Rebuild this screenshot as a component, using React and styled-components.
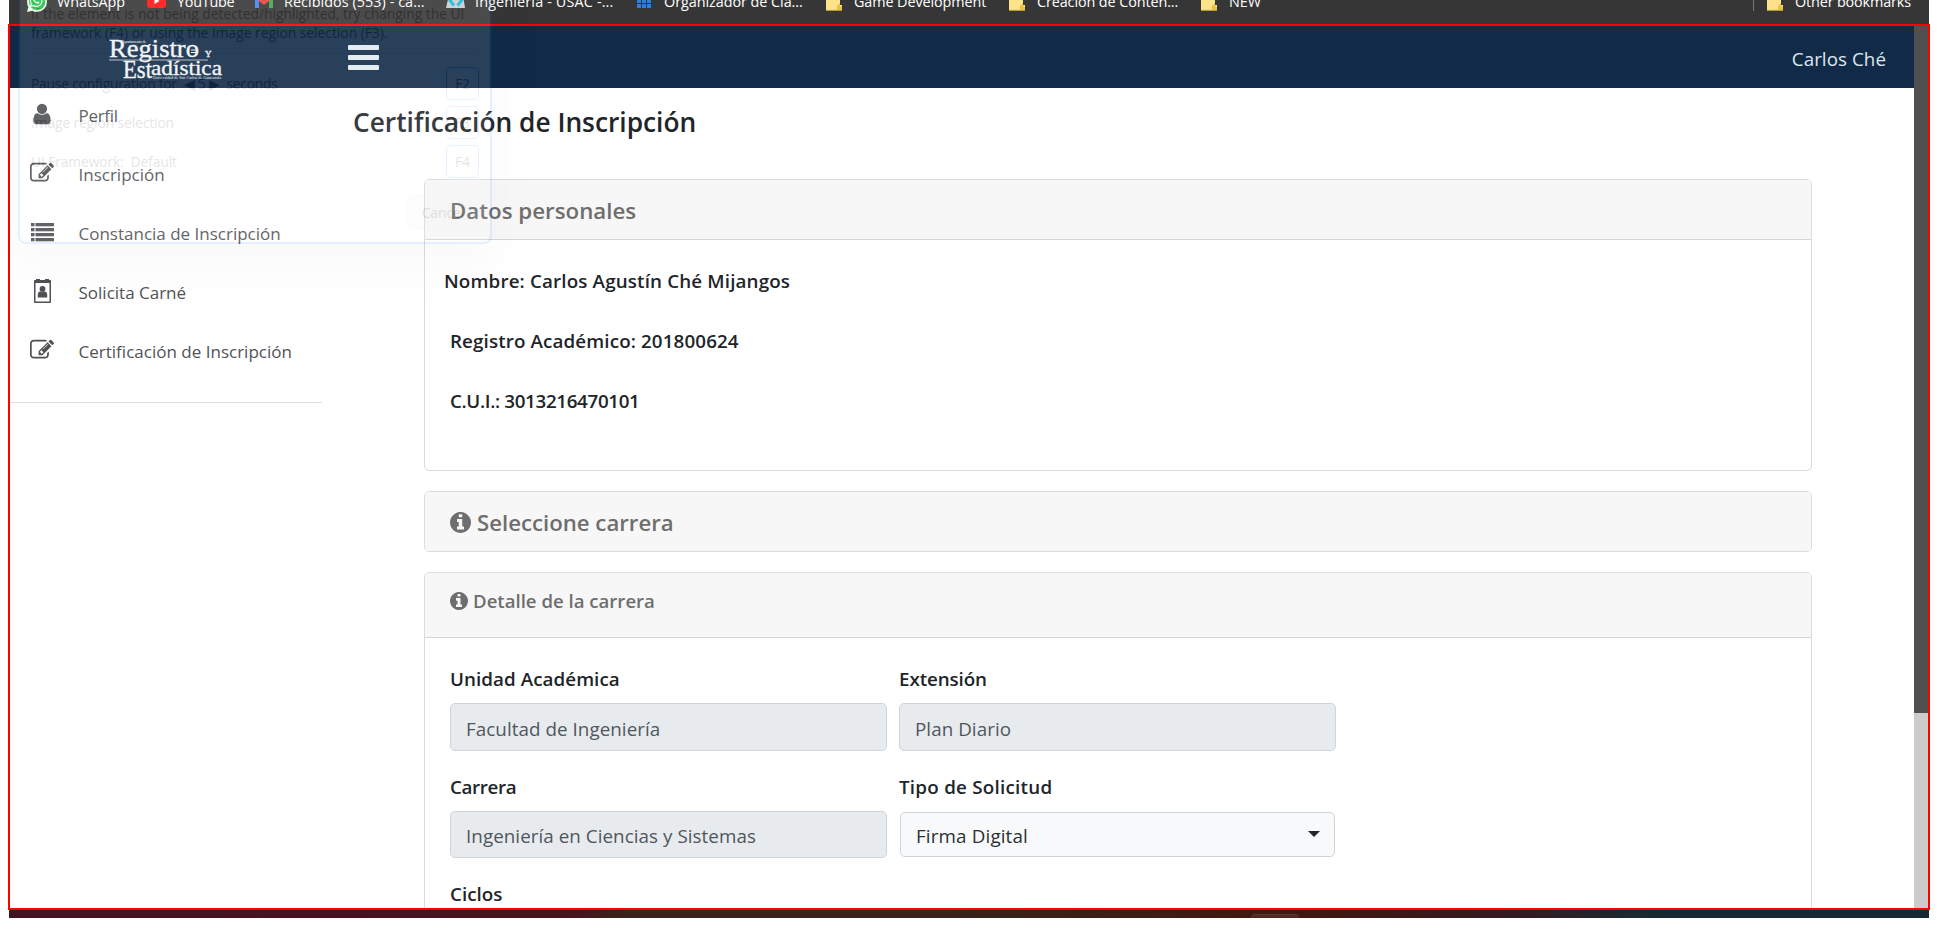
import React from "react";
import styled, { createGlobalStyle } from "styled-components";
import { FaWhatsapp } from "react-icons/fa";

const Global = createGlobalStyle`
  body { margin: 0; background: #fff; font-family: "Open Sans", "Noto Sans", sans-serif; color: #212529; overflow: hidden; }
  *, *::before, *::after { box-sizing: border-box; }
  h1, h2, h3, p { margin: 0; }
`;

const Screen = styled.div`
  position: relative;
  width: 1938px;
  height: 934px;
  padding: 0 9px 0 8px;
  overflow: hidden;
  background: #fff;
`;

const BookmarkBar = styled.div`
  height: 24px;
  margin-left: 1px;
  background: #363636;
  overflow: hidden;
`;
const BookmarkRow = styled.div`
  display: flex;
  align-items: center;
  height: 30px;
  margin-top: -14px;
  padding-left: 18px;
`;
const Bookmark = styled.div`
  display: flex;
  align-items: center;
  flex: none;
  width: ${(p) => p.$width}px;
  color: #fff;
  font-size: 14.4px;
  line-height: 18px;
  white-space: pre;
  letter-spacing: ${(p) => p.$track || 0}px;
`;
const BookmarkIcon = styled.span`
  display: flex;
  flex: none;
  width: ${(p) => p.$slot || 28}px;
`;
const BookmarkLabel = styled.span`
  padding-top: 2px;
`;
const OtherBookmarks = styled.div`
  display: flex;
  margin-left: auto;
  padding-left: 13px;
  border-left: 1px solid #777;
`;

const Frame = styled.div`
  display: flex;
  width: 1922px;
  height: 886px;
  border: 2px solid #fe0000;
`;
const Page = styled.div`
  width: 1904px;
  display: flex;
  flex-direction: column;
  overflow: hidden;
`;
const Scrollbar = styled.div`
  width: 14px;
  background: #ccc;
`;
const Thumb = styled.div`
  height: 687px;
  background: #505050;
`;

const Header = styled.header`
  display: flex;
  align-items: center;
  flex: none;
  height: 62px;
  padding: 0 28px 0 97px;
  background: #102a47;
`;
const Logo = styled.svg`
  width: 130px;
  height: 48px;
`;
const Burger = styled.div`
  display: flex;
  flex-direction: column;
  gap: 5px;
  margin-left: 110.5px;
  span { width: 31px; height: 5px; border-radius: 1px; background: #e0eaf1; }
`;
const UserName = styled.span`
  margin-left: auto;
  padding-top: 3px;
  font-size: 18.8px;
  line-height: 26px;
  letter-spacing: 0.05px;
  color: #dfe7ef;
`;

const Columns = styled.div`
  display: flex;
  flex: 1;
`;
const Sidebar = styled.nav`
  width: 312px;
  height: 315px;
  border-bottom: 1px solid #dedede;
`;
const NavItem = styled.div`
  display: flex;
  align-items: center;
  height: 59px;
  padding-left: 20px;
  color: #515357;
  font-size: 17px;
  line-height: 24px;
  letter-spacing: ${(p) => p.$track || 0}px;
  &:first-child { margin-top: -2px; }
  svg { flex: none; width: 24px; height: 24px; margin: -3px 24.5px 0 0; fill: #505154; }
`;

const Main = styled.main`
  flex: 1;
  padding-left: 31px;
`;
const Title = styled.h1`
  height: 91px;
  padding-top: 15px;
  font-size: 26.3px;
  line-height: 38px;
  font-weight: 600;
`;
const Stack = styled.div`
  display: flex;
  flex-direction: column;
  gap: 20px;
  width: 1388px;
  margin-left: 71px;
`;
const Card = styled.section`
  height: ${(p) => p.$height}px;
  border: 1px solid #dcdcdc;
  border-radius: 5px;
  background: #fff;
  overflow: hidden;
`;
const CardHeader = styled.div`
  display: flex;
  align-items: flex-start;
  height: ${(p) => p.$height}px;
  padding: ${(p) => p.$top}px 0 0 25px;
  border-bottom: 1px solid #d5d5d5;
  background: #f7f7f7;
  color: #6e6e6e;
  svg { flex: none; margin: ${(p) => p.$iconTop || 0}px ${(p) => p.$iconGap || 6}px 0 0; }
`;
const CardTitle = styled.h2`
  font-size: ${(p) => p.$size}px;
  line-height: 32px;
  font-weight: 600;
`;
const Person = styled.div`
  padding: 26px 0 0 25px;
`;
const Fact = styled.p`
  height: 60px;
  margin-left: ${(p) => (p.$outdent ? -6 : 0)}px;
  font-size: 18.8px;
  line-height: 30px;
  font-weight: 600;
  letter-spacing: ${(p) => p.$track || 0}px;
`;

const Form = styled.div`
  display: grid;
  grid-template-columns: 437px 437px;
  column-gap: 12px;
  padding: 26px 0 0 25px;
`;
const Field = styled.div`
  height: ${(p) => p.$height || 108}px;
`;
const Label = styled.div`
  height: 39px;
  font-size: 18.8px;
  line-height: 30px;
  font-weight: 600;
  letter-spacing: ${(p) => p.$track || 0}px;
`;
const Control = styled.div`
  display: flex;
  align-items: center;
  height: ${(p) => p.$height || 48}px;
  padding: ${(p) => (p.$height ? 2 : 4)}px 16px 0 15px;
  border: 1px solid #ced4da;
  border-radius: 5px;
  background: #e8ebee;
  color: #4f565d;
  font-size: 18.8px;
  letter-spacing: 0.06px;
`;
const Select = styled(Control)`
  height: 45px;
  margin: 1px 1px 0;
  padding-top: 3px;
  justify-content: space-between;
  background: #f8f9fa;
  color: #2b3035;
  letter-spacing: 0.15px;
`;
const Caret = styled.span`
  border: 6px solid transparent;
  border-top-color: #212529;
  border-bottom: 0;
  margin-top: -5px;
  margin-right: -2px;
`;

const Desktop = styled.div`
  display: flex;
  align-items: flex-end;
  height: 8px;
  margin: 0 0 0 1px;
  padding-left: 1242px;
  background: linear-gradient(90deg, #421322 0, #47131e 560px, #38241a 620px, #38241a 940px, #40180f 1280px, #351a20 1500px, #182a31 1640px, #182a31 100%);
`;
const TaskTab = styled.div`
  width: 48px;
  height: 4px;
  border-radius: 4px 4px 0 0;
  border-top: 1px solid #5b3b31;
  background: #4b2a20;
`;

const Ghost = styled.div`
  position: absolute;
  left: 18px;
  top: -40px;
  width: 474px;
  height: 284px;
  padding: 40px 11px 0;
  border: 2px solid #0a6cff;
  border-radius: 8px;
  background: #fff;
  color: #000;
  opacity: 0.1;
  box-shadow: 0 24px 40px rgba(0, 0, 0, 0.18);
  font-size: 13.8px;
  line-height: 19px;
  white-space: pre;
`;
const GhostIntro = styled.div`
  height: 52px;
  padding-top: 2px;
  border-bottom: 1px solid #ddd;
`;
const GhostRow = styled.div`
  display: flex;
  align-items: center;
  justify-content: space-between;
  height: 39px;
  letter-spacing: -0.1px;
  &:nth-child(2) { margin-top: 10px; letter-spacing: -0.2px; }
`;
const Key = styled.span`
  display: flex;
  align-items: center;
  justify-content: center;
  width: 33px;
  height: 33px;
  border: 1px solid #1684ff;
  border-radius: 5px;
`;
const Cancel = styled.div`
  width: 72px;
  height: 34px;
  margin: 14px 0 0 auto;
  border-radius: 5px;
  border: 1px solid #ddd;
  background: #f1f1f1;
  line-height: 33px;
  text-align: center;
`;

const Folder = () => (
  <svg width="16" height="20" viewBox="0 0 16 20">
    <path d="M0 2h6l2 2h6v10h2v5H0z" fill="#ffe38a" />
    <path d="M11 19v-4l3-3v3l2 1v3z" fill="#e9c23f" />
    <path d="M0 19.3h16" stroke="#d9b63a" />
  </svg>
);
const WhatsApp = () => (
  <svg width="20" height="22" viewBox="0 -2 20 22">
    <path d="M10 0a10 10 0 0 1 0 20q-3 0-5-1.300L0 20l1.400-5A10 10 0 0 1 10 0z" fill="#e9fbe9" />
    <circle cx="10.200" cy="9.900" r="8.200" fill="#25c24b" />
    <FaWhatsapp x="2" y="1.500" width="16" height="16" color="#fff" />
  </svg>
);
const YouTube = () => (
  <svg width="19" height="14" viewBox="0 0 19 14">
    <rect width="19" height="14" rx="3" fill="#f11" />
    <path d="M7.500 4v6l5-3z" fill="#fff" />
  </svg>
);
const Gmail = () => (
  <svg width="18" height="14" viewBox="0 0 18 14">
    <path d="M0 2v12h4V6z" fill="#4285f4" />
    <path d="M14 6v8h4V2z" fill="#34a853" />
    <path d="M0 2q1-3 4-1l5 4 5-4q3-2 4 1v2l-9 7-9-7z" fill="#ea4335" />
  </svg>
);
const Code = () => (
  <svg width="19" height="13" viewBox="0 0 19 13">
    <path d="M3 0h14l2 13H0z" fill="#c9cdd0" />
    <path d="M8 0L4 5.500l4 5M11.500 0l4 5.500-4 5" fill="none" stroke="#16b9dc" strokeWidth="3" />
  </svg>
);
const Grid = () => (
  <svg width="14" height="14" viewBox="0 0 14 14" fill="#2f7de0">
    {[0, 5, 10].map((y) => [0, 5, 10].map((x) => <rect key={x + "-" + y} x={x} y={y} width="4" height="4" />))}
  </svg>
);

const bookmarks = [
  { icon: WhatsApp, label: "WhatsApp", width: 120, slot: 30, track: -0.1 },
  { icon: YouTube, label: "YouTube", width: 108, slot: 30, track: -0.25 },
  { icon: Gmail, label: "Recibidos (553) - ca...", width: 191, slot: 29, track: 0.05 },
  { icon: Code, label: "Ingeniería - USAC -...", width: 191, slot: 29, track: 0.15 },
  { icon: Grid, label: "Organizador de Cla...", width: 189, slot: 27, track: -0.05 },
  { icon: Folder, label: "Game Development", width: 183, track: -0.1 },
  { icon: Folder, label: "Creación de Conten...", width: 192, track: -0.1 },
  { icon: Folder, label: "NEW", width: 80, track: 0 },
];

const UserIcon = () => (
  <svg viewBox="0 0 1792 1792"><path d="M1536 1399q0 109-62.500 187t-150.500 78h-854q-88 0-150.500-78t-62.500-187q0-85 8.500-160.500t31.500-152 58.500-131 94-89 134.500-34.500q131 128 313 128t313-128q76 0 134.500 34.500t94 89 58.500 131 31.500 152 8.500 160.500zm-256-887q0 159-112.500 271.500t-271.500 112.500-271.500-112.500-112.500-271.500 112.500-271.500 271.500-112.500 271.500 112.500 112.500 271.500z" /></svg>
);
const EditIcon = () => (
  <svg viewBox="0 0 1792 1792"><path d="M888 1184l116-116-152-152-116 116v56h96v96h56zm440-720q-16-16-33 1l-350 350q-17 17-1 33t33-1l350-350q17-17 1-33zm80 594v190q0 119-84.500 203.500t-203.500 84.500h-832q-119 0-203.500-84.500t-84.500-203.500v-832q0-119 84.500-203.500t203.500-84.500h832q63 0 117 25 15 7 18 23 3 17-9 29l-49 49q-14 14-32 8-23-6-45-6h-832q-66 0-113 47t-47 113v832q0 66 47 113t113 47h832q66 0 113-47t47-113v-126q0-13 9-22l64-64q15-15 35-7t20 29zm-96-738l288 288-672 672h-288v-288zm444 132l-92 92-288-288 92-92q28-28 68-28t68 28l152 152q28 28 28 68t-28 68z" /></svg>
);
const InfoIcon = ({ size }) => (
  <svg width={size} height={size} viewBox="128 128 1536 1536" fill="currentColor"><path d="M1152 1376v-160q0-14-9-23t-23-9h-96v-512q0-14-9-23t-23-9h-320q-14 0-23 9t-9 23v160q0 14 9 23t23 9h96v320h-96q-14 0-23 9t-9 23v160q0 14 9 23t23 9h448q14 0 23-9t9-23zm-128-896v-160q0-14-9-23t-23-9h-192q-14 0-23 9t-9 23v160q0 14 9 23t23 9h192q14 0 23-9t9-23zm640 416q0 209-103 385.500t-279.500 279.500-385.500 103-385.500-103-279.500-279.500-103-385.500 103-385.500 279.500-279.500 385.500-103 385.500 103 279.500 279.500 103 385.500z" /></svg>
);
const ListIcon = () => (
  <svg viewBox="0 0 24 24">
    {[3, 8, 13, 18].map((y) => (
      <React.Fragment key={y}>
        <rect x="1" y={y} width="3.500" height="3.300" />
        <rect x="5.500" y={y} width="18.500" height="3.300" />
      </React.Fragment>
    ))}
  </svg>
);
const BadgeIcon = () => (
  <svg viewBox="0 0 24 24">
    <path fillRule="evenodd" d="M5 1h1V0h4v1h5V0h4v1h1q1 0 1 1v21q0 1-1 1H5q-1 0-1-1V2q0-1 1-1zm.500 3v18.500h14V4z" />
    <circle cx="12.500" cy="10" r="2.900" />
    <path d="M7.800 18.500v-2.500q0-3.500 2.500-3.500 2.200 1.300 4.400 0 2.500 0 2.500 3.500v2.500z" />
  </svg>
);

const nav = [
  { icon: UserIcon, label: "Perfil", track: -0.3 },
  { icon: EditIcon, label: "Inscripción", track: 0 },
  { icon: ListIcon, label: "Constancia de Inscripción", track: 0 },
  { icon: BadgeIcon, label: "Solicita Carné", track: 0 },
  { icon: EditIcon, label: "Certificación de Inscripción", track: 0.01 },
];

export default function App() {
  return (
    <Screen>
      <Global />
      <BookmarkBar>
        <BookmarkRow>
          {bookmarks.map(({ icon: Icon, label, width, slot, track }) => (
            <Bookmark key={label} $width={width} $track={track}>
              <BookmarkIcon $slot={slot}><Icon /></BookmarkIcon>
              <BookmarkLabel>{label}</BookmarkLabel>
            </Bookmark>
          ))}
          <OtherBookmarks>
            <Bookmark $width={162} $track={-0.15}>
              <BookmarkIcon><Folder /></BookmarkIcon>
              <BookmarkLabel>Other bookmarks</BookmarkLabel>
            </Bookmark>
          </OtherBookmarks>
        </BookmarkRow>
      </BookmarkBar>
      <Frame>
        <Page>
          <Header>
            <Logo viewBox="0 0 130 48" fill="#f1f4f8" fontFamily="Liberation Serif, serif">
              <text x="14" y="9.500" fontSize="4" textLength="25">Departamento de</text>
              <g stroke="#f1f4f8" strokeWidth="0.35">
                <text x="2" y="24" fontSize="25" textLength="90" lengthAdjust="spacingAndGlyphs">Registro</text>
                <text x="98" y="24" fontSize="9">Y</text>
                <text x="16" y="45" fontSize="25" textLength="29" lengthAdjust="spacingAndGlyphs">Est</text>
                <text x="44" y="42" fontSize="21" textLength="71" lengthAdjust="spacingAndGlyphs">adística</text>
              </g>
              <rect x="2" y="26.500" width="99" height="1" opacity="0.7" />
              <path d="M84 17h6M84 19.500h6" stroke="#f1f4f8" />
              <text x="46" y="46" fontSize="4" textLength="68">Universidad de San Carlos de Guatemala</text>
            </Logo>
            <Burger><span /><span /><span /></Burger>
            <UserName>Carlos Ché</UserName>
          </Header>
          <Columns>
            <Sidebar>
              {nav.map(({ icon: Icon, label, track }) => (
                <NavItem key={label} $track={track}><Icon />{label}</NavItem>
              ))}
            </Sidebar>
            <Main>
              <Title>Certificación de Inscripción</Title>
              <Stack>
                <Card $height={292}>
                  <CardHeader $height={60} $top={15}>
                    <CardTitle $size={22.3}>Datos personales</CardTitle>
                  </CardHeader>
                  <Person>
                    <Fact $outdent $track={0.15}>Nombre: Carlos Agustín Ché Mijangos</Fact>
                    <Fact $track={0.12}>Registro Académico: 201800624</Fact>
                    <Fact $track={-0.34}>C.U.I.: 3013216470101</Fact>
                  </Person>
                </Card>
                <Card $height={61}>
                  <CardHeader $height={60} $top={15} $iconTop={5}>
                    <InfoIcon size={21} />
                    <CardTitle $size={22.2}>Seleccione carrera</CardTitle>
                  </CardHeader>
                </Card>
                <Card $height={400}>
                  <CardHeader $height={65} $top={12} $iconTop={7} $iconGap={5}>
                    <InfoIcon size={18} />
                    <CardTitle $size={18.6}>Detalle de la carrera</CardTitle>
                  </CardHeader>
                  <Form>
                    <Field><Label $track={0.06}>Unidad Académica</Label><Control>Facultad de Ingeniería</Control></Field>
                    <Field><Label $track={-0.1}>Extensión</Label><Control>Plan Diario</Control></Field>
                    <Field $height={107}><Label $track={-0.35}>Carrera</Label><Control $height={47}>Ingeniería en Ciencias y Sistemas</Control></Field>
                    <Field $height={107}><Label $track={0.25}>Tipo de Solicitud</Label><Select>Firma Digital<Caret /></Select></Field>
                    <Field><Label>Ciclos</Label></Field>
                  </Form>
                </Card>
              </Stack>
            </Main>
          </Columns>
        </Page>
        <Scrollbar><Thumb /></Scrollbar>
      </Frame>
      <Desktop><TaskTab /></Desktop>
      <Ghost>
        <GhostIntro>{"If the element is not being detected/highlighted, try changing the UI\nframework (F4) or using the Image region selection (F3)."}</GhostIntro>
        <GhostRow>Pause configuration for  ◀ 5 ▶  seconds<Key>F2</Key></GhostRow>
        <GhostRow>Image region selection<Key>F3</Key></GhostRow>
        <GhostRow>UI Framework:  Default<Key>F4</Key></GhostRow>
        <Cancel>Cancel</Cancel>
      </Ghost>
    </Screen>
  );
}
